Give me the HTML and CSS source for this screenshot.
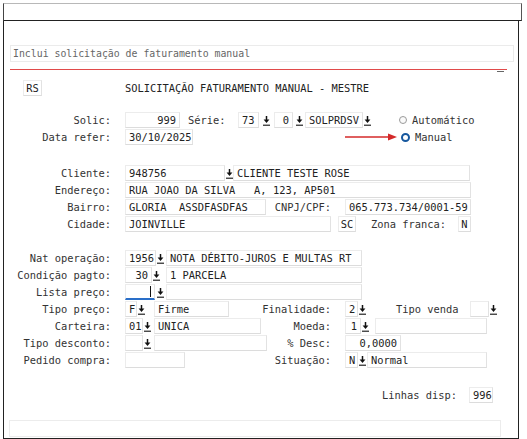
FILE: index.html
```html
<!DOCTYPE html>
<html lang="pt">
<head>
<meta charset="utf-8">
<title>Solicitação faturamento manual</title>
<link rel="stylesheet" href="styles.css">
</head>
<body>
<div class="win">
  <div class="titlebar"></div>
  <div class="content">
    <div class="desc">Inclui solicitação de faturamento manual</div>
    <div class="rule"><span class="tick"></span></div>

    <div class="row head">
      <div class="fld rs">RS</div>
      <div class="title">SOLICITAÇÃO FATURAMENTO MANUAL - MESTRE</div>
    </div>

    <div class="block b1">
      <div class="row">
        <div class="lbl">Solic:</div>
        <div class="fld r w55">999</div>
        <div class="txt serie">Série:</div>
        <div class="fld w21">73</div>
        <svg class="dd ml4" viewBox="0 0 7 11"><path d="M3.5 1v4" stroke="#111" stroke-width="1.5"/><path d="M0.6 4.4h5.8L3.5 8z" fill="#111"/><path d="M0 10.2h7" stroke="#111" stroke-width="1.1"/></svg>
        <div class="fld r w19 ml4">0</div>
        <svg class="dd ml3" viewBox="0 0 7 11"><path d="M3.5 1v4" stroke="#111" stroke-width="1.5"/><path d="M0.6 4.4h5.8L3.5 8z" fill="#111"/><path d="M0 10.2h7" stroke="#111" stroke-width="1.1"/></svg>
        <div class="fld w58 ml2">SOLPRDSV</div>
        <svg class="dd ml1" viewBox="0 0 7 11"><path d="M3.5 1v4" stroke="#111" stroke-width="1.5"/><path d="M0.6 4.4h5.8L3.5 8z" fill="#111"/><path d="M0 10.2h7" stroke="#111" stroke-width="1.1"/></svg>
        <span class="radio off ml28"></span>
        <span class="rtxt">Automático</span>
      </div>
      <div class="row">
        <div class="lbl">Data refer:</div>
        <div class="fld w68">30/10/2025</div>
        <svg class="redarrow" viewBox="0 0 52 8"><path d="M0 4h44" stroke="#d42a2a" stroke-width="1.6"/><path d="M43 0.5L52 4L43 7.5z" fill="#d42a2a"/></svg>
        <span class="radio on"></span>
        <span class="rtxt">Manual</span>
      </div>
    </div>

    <div class="block b2">
      <div class="row">
        <div class="lbl">Cliente:</div>
        <div class="fld w100">948756</div>
        <svg class="dd ml1" viewBox="0 0 7 11"><path d="M3.5 1v4" stroke="#111" stroke-width="1.5"/><path d="M0.6 4.4h5.8L3.5 8z" fill="#111"/><path d="M0 10.2h7" stroke="#111" stroke-width="1.1"/></svg>
        <div class="fld w237">CLIENTE TESTE ROSE</div>
      </div>
      <div class="row">
        <div class="lbl">Endereço:</div>
        <div class="fld w346">RUA JOAO DA SILVA   A, 123, AP501</div>
      </div>
      <div class="row">
        <div class="lbl">Bairro:</div>
        <div class="fld w141">GLORIA  ASSDFASDFAS</div>
        <div class="rlbl w65">CNPJ/CPF:</div>
        <div class="fld w126">065.773.734/0001-59</div>
      </div>
      <div class="row">
        <div class="lbl">Cidade:</div>
        <div class="fld w206">JOINVILLE</div>
        <div class="fld c w18 ml7">SC</div>
        <div class="txt zona">Zona franca:</div>
        <div class="fld c w13">N</div>
      </div>
    </div>

    <div class="block b3">
      <div class="row">
        <div class="lbl">Nat operação:</div>
        <div class="fld w31">1956</div>
        <svg class="dd ml1" viewBox="0 0 7 11"><path d="M3.5 1v4" stroke="#111" stroke-width="1.5"/><path d="M0.6 4.4h5.8L3.5 8z" fill="#111"/><path d="M0 10.2h7" stroke="#111" stroke-width="1.1"/></svg>
        <div class="fld w196 ml2">NOTA DÉBITO-JUROS E MULTAS RT</div>
      </div>
      <div class="row">
        <div class="lbl">Condição pagto:</div>
        <div class="fld r w27">30</div>
        <svg class="dd ml1" viewBox="0 0 7 11"><path d="M3.5 1v4" stroke="#111" stroke-width="1.5"/><path d="M0.6 4.4h5.8L3.5 8z" fill="#111"/><path d="M0 10.2h7" stroke="#111" stroke-width="1.1"/></svg>
        <div class="fld w196 ml6">1 PARCELA</div>
      </div>
      <div class="row">
        <div class="lbl">Lista preço:</div>
        <div class="fld focus w30"><span class="caret"></span></div>
        <svg class="dd ml2" viewBox="0 0 7 11"><path d="M3.5 1v4" stroke="#111" stroke-width="1.5"/><path d="M0.6 4.4h5.8L3.5 8z" fill="#111"/><path d="M0 10.2h7" stroke="#111" stroke-width="1.1"/></svg>
        <div class="fld w196 ml2"></div>
      </div>
      <div class="row">
        <div class="lbl">Tipo preço:</div>
        <div class="lg">
          <div class="fld w12">F</div>
          <svg class="dd ml1" viewBox="0 0 7 11"><path d="M3.5 1v4" stroke="#111" stroke-width="1.5"/><path d="M0.6 4.4h5.8L3.5 8z" fill="#111"/><path d="M0 10.2h7" stroke="#111" stroke-width="1.1"/></svg>
          <div class="fld w75 ml9">Firme</div>
        </div>
        <div class="rlbl">Finalidade:</div>
        <div class="fld w13">2</div>
        <svg class="dd ml1" viewBox="0 0 7 11"><path d="M3.5 1v4" stroke="#111" stroke-width="1.5"/><path d="M0.6 4.4h5.8L3.5 8z" fill="#111"/><path d="M0 10.2h7" stroke="#111" stroke-width="1.1"/></svg>
        <div class="txt tvenda">Tipo venda</div>
        <div class="fld w19"></div>
        <svg class="dd ml1" viewBox="0 0 7 11"><path d="M3.5 1v4" stroke="#111" stroke-width="1.5"/><path d="M0.6 4.4h5.8L3.5 8z" fill="#111"/><path d="M0 10.2h7" stroke="#111" stroke-width="1.1"/></svg>
      </div>
      <div class="row">
        <div class="lbl">Carteira:</div>
        <div class="lg">
          <div class="fld w18">01</div>
          <svg class="dd ml1" viewBox="0 0 7 11"><path d="M3.5 1v4" stroke="#111" stroke-width="1.5"/><path d="M0.6 4.4h5.8L3.5 8z" fill="#111"/><path d="M0 10.2h7" stroke="#111" stroke-width="1.1"/></svg>
          <div class="fld w107 ml3">UNICA</div>
        </div>
        <div class="rlbl">Moeda:</div>
        <div class="fld r w16">1</div>
        <svg class="dd ml1" viewBox="0 0 7 11"><path d="M3.5 1v4" stroke="#111" stroke-width="1.5"/><path d="M0.6 4.4h5.8L3.5 8z" fill="#111"/><path d="M0 10.2h7" stroke="#111" stroke-width="1.1"/></svg>
        <div class="fld w112 ml6"></div>
      </div>
      <div class="row">
        <div class="lbl">Tipo desconto:</div>
        <div class="lg">
          <div class="fld w18"></div>
          <svg class="dd ml1" viewBox="0 0 7 11"><path d="M3.5 1v4" stroke="#111" stroke-width="1.5"/><path d="M0.6 4.4h5.8L3.5 8z" fill="#111"/><path d="M0 10.2h7" stroke="#111" stroke-width="1.1"/></svg>
          <div class="fld w113 ml3"></div>
        </div>
        <div class="rlbl">% Desc:</div>
        <div class="fld r w56">0,0000</div>
      </div>
      <div class="row">
        <div class="lbl">Pedido compra:</div>
        <div class="lg">
          <div class="fld w60"></div>
        </div>
        <div class="rlbl">Situação:</div>
        <div class="fld w13">N</div>
        <svg class="dd ml1" viewBox="0 0 7 11"><path d="M3.5 1v4" stroke="#111" stroke-width="1.5"/><path d="M0.6 4.4h5.8L3.5 8z" fill="#111"/><path d="M0 10.2h7" stroke="#111" stroke-width="1.1"/></svg>
        <div class="fld w120 ml1">Normal</div>
      </div>
    </div>

    <div class="row linhas">
      <div class="txt">Linhas disp:</div>
      <div class="fld w24">996</div>
    </div>

    <div class="status"></div>
  </div>
</div>
</body>
</html>
```

FILE: styles.css
```css
* { box-sizing: border-box; }
html, body { margin: 0; padding: 0; background: #fff; }
body {
  font-family: "DejaVu Sans Mono", "Liberation Mono", monospace;
  font-size: 10.4px;
  color: #333;
}
.win { margin: 3px 0 0 3px; width: 519px; }
.titlebar {
  height: 18px;
  border-top: 1px solid #b8b8b8;
  border-left: 1px solid #444;
  border-right: 1px solid #555;
  border-bottom: 1px solid #222;
}
.content {
  width: 516px;
  height: 418px;
  border-left: 1px solid #222;
  border-right: 1px solid #222;
  border-bottom: 1px solid #222;
  padding-top: 24px;
}
.desc {
  margin-left: 6px;
  width: 504px;
  height: 17px;
  line-height: 15px;
  padding: 0 2px;
  font-size: 9.85px;
  color: #666;
  border: 1px solid #ebebeb;
  white-space: pre;
}
.rule {
  margin: 7px 0 0 6px;
  width: 497px;
  border-top: 1px solid #e14a4a;
  height: 3px;
  display: flex;
  justify-content: flex-end;
  padding-right: 3px;
}
.tick { width: 7px; height: 1px; background: #666; margin-top: 1px; }
.row {
  display: flex;
  align-items: center;
  height: 16px;
  margin-bottom: 1px;
  white-space: pre;
}
.head { margin-top: 7px; height: 17px; }
.rs { margin-left: 19px; width: 19px; height: 17px; justify-content: center; padding: 0; }
.title { margin-left: 83px; color: #222; }
.block { display: flex; flex-direction: column; }
.b1 { margin-top: 16px; }
.b2 { margin-top: 19px; }
.b3 { margin-top: 17px; }
.lbl { width: 107px; margin-right: 14px; text-align: right; color: #333; }
.lg { display: flex; align-items: center; width: 126px; flex: 0 0 126px; }
.rlbl { width: 80px; margin-right: 14px; text-align: right; color: #333; }
.rlbl.w65 { width: 65px; }
.fld {
  display: flex;
  align-items: center;
  height: 16px;
  padding: 0 3px;
  background: #fff;
  color: #222;
  border: 1px solid #ececec;
  border-bottom-color: #dcdcdc;
  border-right-color: #e2e2e2;
  overflow: hidden;
  flex: 0 0 auto;
}
.fld.r { justify-content: flex-end; }
.fld.c { justify-content: center; padding: 0; }
.fld.focus { border-bottom: 2px solid #2a6fc9; justify-content: flex-end; padding-right: 3px; }
.caret { width: 1px; height: 11px; background: #111; }
.txt { color: #333; }
.serie { margin-left: 8px; width: 50px; }
.zona { margin-left: 15px; width: 87px; }
.tvenda { margin-left: 30px; width: 74px; }
.dd { width: 7px; height: 11px; flex: 0 0 7px; }
.redarrow { width: 52px; height: 8px; margin-left: 152px; flex: 0 0 52px; }
.radio {
  display: inline-block;
  width: 8px;
  height: 8px;
  border-radius: 50%;
  margin-left: 5px;
  flex: 0 0 8px;
}
.radio.off { border: 1px solid #9a9a9a; background: #fafafa; }
.radio.on { border: 2.5px solid #17589e; background: #fff; width: 9px; height: 9px; flex-basis: 9px; margin-left: 4px; }
.rtxt { margin-left: 5px; color: #333; }
.linhas { justify-content: flex-end; padding-right: 25px; margin-top: 18px; }
.linhas .txt { margin-right: 12px; }
.status {
  margin: 17px 0 0 5px;
  width: 492px;
  height: 17px;
  border: 1px solid #ececec;
}
.w12 { width: 12px; } .w13 { width: 13px; } .w16 { width: 16px; } .w18 { width: 18px; }
.w19 { width: 19px; } .w21 { width: 21px; } .w24 { width: 24px; } .w27 { width: 27px; }
.w30 { width: 30px; } .w31 { width: 31px; } .w55 { width: 55px; } .w56 { width: 56px; }
.w58 { width: 58px; } .w60 { width: 60px; } .w68 { width: 68px; } .w75 { width: 75px; }
.w100 { width: 100px; } .w107 { width: 107px; } .w112 { width: 112px; } .w113 { width: 113px; }
.w120 { width: 120px; } .w126 { width: 126px; } .w141 { width: 141px; } .w196 { width: 196px; }
.w206 { width: 206px; } .w237 { width: 237px; } .w346 { width: 346px; }
.ml1 { margin-left: 1px; } .ml2 { margin-left: 2px; } .ml3 { margin-left: 3px; }
.ml4 { margin-left: 4px; } .ml6 { margin-left: 6px; } .ml7 { margin-left: 7px; }
.ml9 { margin-left: 9px; } .ml28 { margin-left: 28px; }
```
